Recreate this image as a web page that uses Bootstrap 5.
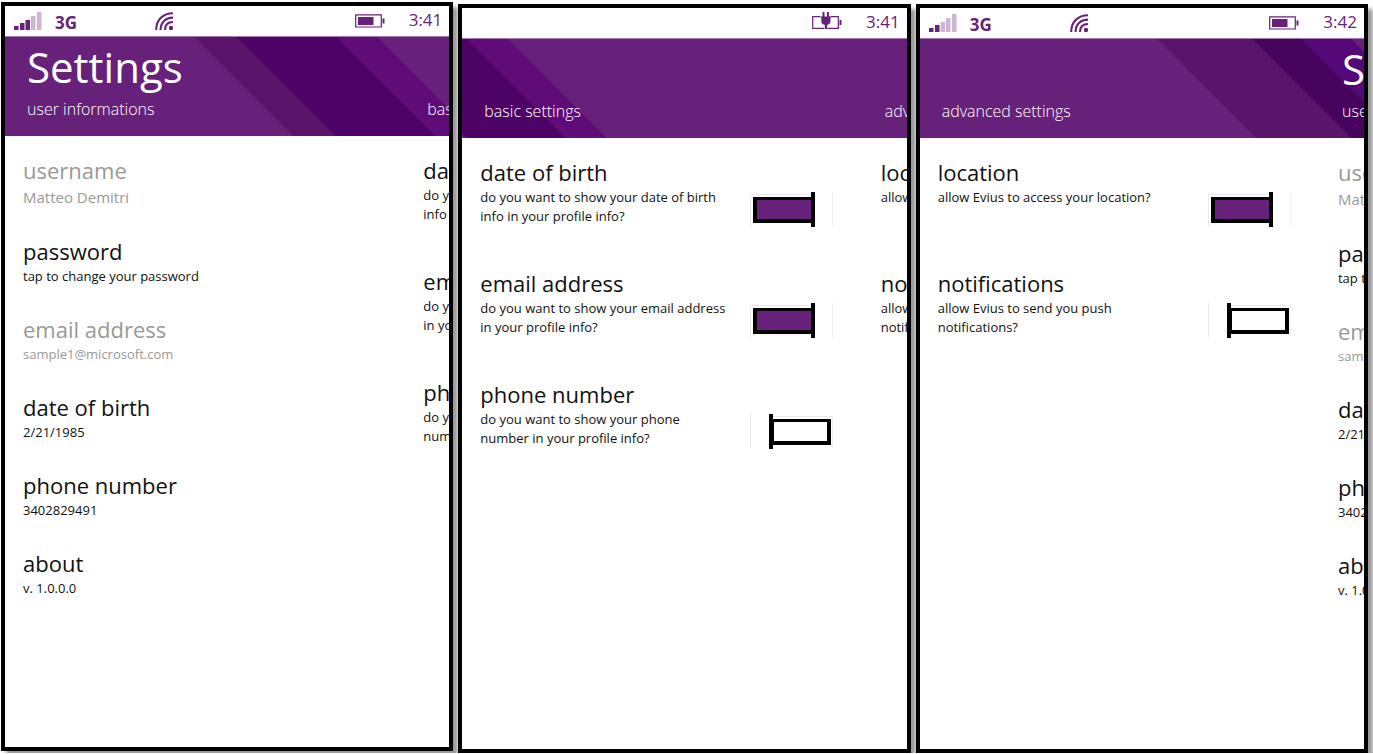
<!DOCTYPE html>
<html lang="en">
<head>
<meta charset="utf-8">
<meta name="viewport" content="width=device-width, initial-scale=1">
<title>Settings</title>
<link href="https://cdn.jsdelivr.net/npm/bootstrap@5.3.0/dist/css/bootstrap.min.css" rel="stylesheet">
<style>
  :root { --accent: #68217a; }
  body { font-family: "Open Sans", "Noto Sans", sans-serif; color: #111; background: #fff; }
  .hub { gap: 5px; padding: 2px 5px 0 1px; }
  .phone {
    flex: 1 1 0; min-width: 0; min-height: calc(100vh - 5px); overflow: hidden;
    border: 4px solid #000; background: #fff; box-shadow: 5px 5px 4px #999;
  }
  .phone + .phone { margin-top: 2px; }
  .status { height: 30px; padding: 0 7px 0 9px; color: var(--accent); }
  .status svg { display: block; flex: none; }
  .signal, .wifi { margin-top: 6px; }
  .battery { margin-top: 8px; }
  .charging { margin-top: 3px; }
  .network { font-size: 17px; line-height: 24px; font-weight: 700; margin: 5px 0 0 13px; }
  .wifi { margin-left: 78px; }
  .clock { font-size: 17px; line-height: 28px; font-weight: 400; margin-left: 24px; }
  .banner { height: 100px; background: var(--accent); color: #fff; border-top: 1px solid #a57bb0; }
  .banner svg { position: absolute; inset: 0; width: 100%; height: 100%; }
  .banner-row { position: relative; padding-left: 22px; }
  .banner-peek { flex: 0 0 22px; min-width: 0; overflow: hidden; white-space: nowrap; }
  .hub-title { font-size: 42px; line-height: 60px; height: 60px; font-weight: 400; margin: 0; }
  .hub-sub { font-size: 16px; line-height: 24px; font-weight: 300; margin: 0; }
  .panes { padding: 19px 0 0 18px; }
  .peek { flex: 0 0 26px; min-width: 0; overflow: hidden; white-space: nowrap; }
  .entry { margin-bottom: 28px; text-align: left; }
  .entry h2, .choice h2 { font-size: 22px; line-height: 30px; font-weight: 400; margin: 0 0 1px; }
  .entry p, .choice p { font-size: 13px; line-height: 19px; margin: 0; }
  .entry .person { font-size: 15px; line-height: 22px; }
  .faded { color: #999; }
  .choice { margin-bottom: 41px; min-height: 70px; gap: 20px; }
  .choice-text { flex: 0 1 250px; display: block; }
  .switch {
    appearance: none; flex: none; width: 83px; height: 35px; margin: 35px 0 0; background-repeat: no-repeat;
    background-image: linear-gradient(#000, #000), linear-gradient(#fff, #fff), linear-gradient(#000, #000),
      linear-gradient(#ece6ef, #ece6ef), linear-gradient(#ece6ef, #ece6ef), linear-gradient(#f4f1f6, #f4f1f6);
    background-size: 4px 35px, 53px 19px, 60px 26px, 62px 1px, 1px 34px, 1px 32px;
    background-position: 19px 0, 24px 8px, 21px 5px, 21px 2px, 0 0, 82px 2px;
  }
  .switch:checked {
    background-image: linear-gradient(#000, #000), linear-gradient(var(--accent), var(--accent)), linear-gradient(#000, #000),
      linear-gradient(#ece6ef, #ece6ef), linear-gradient(#ece6ef, #ece6ef), linear-gradient(#f4f1f6, #f4f1f6);
    background-size: 4px 35px, 54px 19px, 60px 26px, 62px 1px, 1px 32px, 1px 35px;
    background-position: 61px 0, 7px 8px, 3px 5px, 0 2px, 0 2px, 82px 0;
  }
</style>
</head>
<body>
<svg class="d-none" aria-hidden="true">
  <symbol id="wifi" viewBox="0 0 19 19">
    <g fill="none" stroke="#68217a" stroke-width="2.1">
      <path d="M1.200 18C1.200 8 8 1.200 18 1.200"/><path d="M5.600 18C5.600 10.500 10.500 5.600 18 5.600"/><path d="M10 18C10 13 13 10 18 10"/>
    </g>
    <circle cx="16" cy="16" r="2.200" fill="#68217a"/>
  </symbol>
  <symbol id="battery" viewBox="0 0 30 14">
    <path d="M.7 .8h25.600v12.200H.7z" fill="#fff" stroke="#68217a" stroke-width="1.200"/>
    <path d="M3 3h15.500v8H3zM27.500 4.500h2v5h-2z" fill="#68217a"/>
  </symbol>
</svg>
<main class="hub d-flex align-items-start">

  <section class="phone" aria-label="User informations">
    <div class="status d-flex align-items-start">
      <svg class="signal" width="28" height="18" viewBox="0 0 28 18" role="img" aria-label="Signal"><path fill="#68217a" d="M0 14h4.500v4H0zM6 11h4.500v7H6zM11.500 8h4.500v10h-4.500z"/><path fill="#d0b6d6" d="M17 4h4.500v14H17zM23 0h4.500v18H23z"/></svg>
      <span class="network">3G</span>
      <svg class="wifi" width="19" height="19" role="img" aria-label="Wi-Fi"><use href="#wifi"/></svg>
      <svg class="battery ms-auto" width="30" height="14" role="img" aria-label="Battery"><use href="#battery"/></svg>
      <span class="clock">3:41</span>
    </div>
    <header class="banner position-relative">
      <svg viewBox="0 0 445 99" preserveAspectRatio="none" aria-hidden="true">
        <path fill="#5a146a" d="M190 0h44l99 99h-44z"/><path fill="#4d0466" d="M232 0h101l99 99h-101z"/><path fill="#5f0c78" d="M332 0h41l99 99h-41z"/>
      </svg>
      <div class="banner-row d-flex">
        <div class="flex-grow-1"><h1 class="hub-title">Settings</h1><p class="hub-sub">user informations</p></div>
        <div class="banner-peek" aria-hidden="true"><div class="hub-title"></div><p class="hub-sub">bas</p></div>
      </div>
    </header>
    <div class="panes d-flex">
      <div class="flex-grow-1">
        <div class="entry faded"><h2>username</h2><p class="person">Matteo Demitri</p></div>
        <button type="button" class="entry d-block w-100 p-0 border-0 bg-transparent text-reset"><h2>password</h2><p>tap to change your password</p></button>
        <div class="entry faded"><h2>email address</h2><p>sample1@microsoft.com</p></div>
        <div class="entry"><h2>date of birth</h2><p>2/21/1985</p></div>
        <div class="entry"><h2>phone number</h2><p>3402829491</p></div>
        <div class="entry"><h2>about</h2><p>v. 1.0.0.0</p></div>
      </div>
      <div class="peek" aria-hidden="true">
        <div class="choice"><h2>da</h2><p>do y<br>info</p></div>
        <div class="choice"><h2>em</h2><p>do y<br>in yo</p></div>
        <div class="choice"><h2>ph</h2><p>do y<br>num</p></div>
      </div>
    </div>
  </section>

  <section class="phone" aria-label="Basic settings">
    <div class="status d-flex align-items-start">
      <svg class="charging ms-auto" width="30" height="19" viewBox="0 0 30 19" role="img" aria-label="Charging">
        <path d="M8.500 5.700H.7v11.600h11.600M18.500 5.700h7.800v11.600H15.500" fill="none" stroke="#68217a" stroke-width="1.200"/>
        <path d="M27.500 9h2v5h-2zM10.500 1h2v4.500h-2zM15 1h2v4.500h-2zM8.800 5.500h10v1.500h-.3v3.500c0 2-1.600 3-3.300 3.200v4.300h-2.400v-4.300c-1.900-.2-3.500-1.200-3.500-3.200v-3.500h-.5z" fill="#68217a"/>
      </svg>
      <span class="clock">3:41</span>
    </div>
    <header class="banner position-relative">
      <svg viewBox="0 0 445 99" preserveAspectRatio="none" aria-hidden="true">
        <path fill="#4d0466" d="M-95 0h101l99 99h-101z"/><path fill="#5f0c78" d="M5 0h41l99 99h-41z"/>
      </svg>
      <div class="banner-row d-flex">
        <div class="flex-grow-1"><div class="hub-title"></div><h1 class="hub-sub">basic settings</h1></div>
        <div class="banner-peek" aria-hidden="true"><div class="hub-title"></div><p class="hub-sub">adv</p></div>
      </div>
    </header>
    <div class="panes d-flex">
      <div class="flex-grow-1">
        <div class="choice d-flex"><label class="choice-text" for="show-birth"><h2>date of birth</h2><p>do you want to show your date of birth info in your profile info?</p></label><input class="switch" type="checkbox" role="switch" id="show-birth" checked></div>
        <div class="choice d-flex"><label class="choice-text" for="show-email"><h2>email address</h2><p>do you want to show your email address in your profile info?</p></label><input class="switch" type="checkbox" role="switch" id="show-email" checked></div>
        <div class="choice d-flex"><label class="choice-text" for="show-phone"><h2>phone number</h2><p>do you want to show your phone number in your profile info?</p></label><input class="switch" type="checkbox" role="switch" id="show-phone"></div>
      </div>
      <div class="peek" aria-hidden="true">
        <div class="choice"><h2>loc</h2><p>allow</p></div>
        <div class="choice"><h2>no</h2><p>allow<br>notif</p></div>
      </div>
    </div>
  </section>

  <section class="phone" aria-label="Advanced settings">
    <div class="status d-flex align-items-start">
      <svg class="signal" width="28" height="18" viewBox="0 0 28 18" role="img" aria-label="Signal"><path fill="#68217a" d="M0 14h4.500v4H0zM6 11h4.500v7H6z"/><path fill="#d0b6d6" d="M11.500 8h4.500v10h-4.500zM17 4h4.500v14H17zM23 0h4.500v18H23z"/></svg>
      <span class="network">3G</span>
      <svg class="wifi" width="19" height="19" role="img" aria-label="Wi-Fi"><use href="#wifi"/></svg>
      <svg class="battery ms-auto" width="30" height="14" role="img" aria-label="Battery"><use href="#battery"/></svg>
      <span class="clock">3:42</span>
    </div>
    <header class="banner position-relative">
      <svg viewBox="0 0 445 99" preserveAspectRatio="none" aria-hidden="true">
        <path fill="#5a146a" d="M238 0h97l99 99h-97z"/><path fill="#46045f" d="M333 0h50l99 99h-50z"/><path fill="#550878" d="M382 0h50l99 99h-50z"/>
      </svg>
      <div class="banner-row d-flex">
        <div class="flex-grow-1"><div class="hub-title"></div><h1 class="hub-sub">advanced settings</h1></div>
        <div class="banner-peek" aria-hidden="true"><div class="hub-title">S</div><p class="hub-sub">use</p></div>
      </div>
    </header>
    <div class="panes d-flex">
      <div class="flex-grow-1">
        <div class="choice d-flex"><label class="choice-text" for="location"><h2>location</h2><p>allow Evius to access your location?</p></label><input class="switch" type="checkbox" role="switch" id="location" checked></div>
        <div class="choice d-flex"><label class="choice-text" for="notifications"><h2>notifications</h2><p>allow Evius to send you push notifications?</p></label><input class="switch" type="checkbox" role="switch" id="notifications"></div>
      </div>
      <div class="peek" aria-hidden="true">
        <div class="entry faded"><h2>use</h2><p class="person">Mat</p></div>
        <div class="entry"><h2>pa</h2><p>tap t</p></div>
        <div class="entry faded"><h2>em</h2><p>sam</p></div>
        <div class="entry"><h2>da</h2><p>2/21</p></div>
        <div class="entry"><h2>ph</h2><p>3402</p></div>
        <div class="entry"><h2>ab</h2><p>v. 1.0</p></div>
      </div>
    </div>
  </section>
</main>
<script src="https://cdn.jsdelivr.net/npm/bootstrap@5.3.0/dist/js/bootstrap.bundle.min.js"></script>
</body>
</html>
